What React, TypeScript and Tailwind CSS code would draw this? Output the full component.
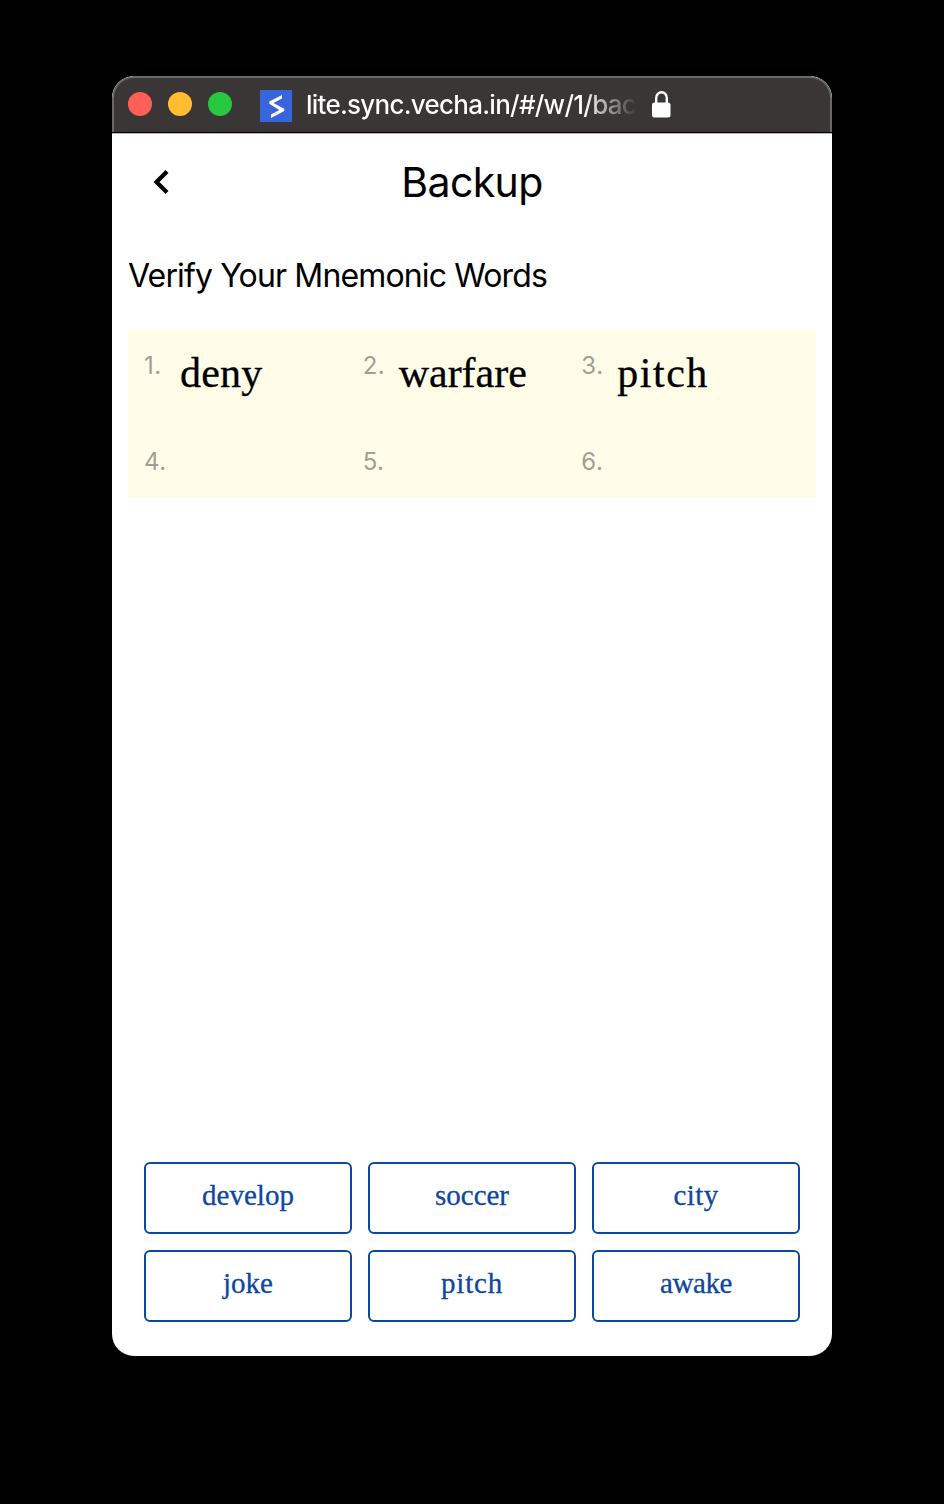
const slots = [
  { word: "deny", spacing: "tracking-[0.2px]" },
  { word: "warfare", spacing: "" },
  { word: "pitch", spacing: "tracking-[1.5px]" },
  { word: "", spacing: "" },
  { word: "", spacing: "" },
  { word: "", spacing: "" },
];

const choices = [
  { word: "develop", spacing: "" },
  { word: "soccer", spacing: "" },
  { word: "city", spacing: "tracking-[0.4px]" },
  { word: "joke", spacing: "" },
  { word: "pitch", spacing: "tracking-[0.8px]" },
  { word: "awake", spacing: "tracking-[-0.4px]" },
];

function TitleBar() {
  return (
    <div className="flex h-14 shrink-0 items-center rounded-t-[22px] border-2 border-b-0 border-[#6a6867] bg-[#3a3635] pl-3.5">
      <div className="mb-0.5 flex gap-4">
        <span className="size-6 rounded-full bg-[#ff5f57]" />
        <span className="size-6 rounded-full bg-[#febc2e]" />
        <span className="size-6 rounded-full bg-[#28c840]" />
      </div>
      <svg className="mt-0.5 ml-7 size-8 shrink-0" viewBox="0 0 32 32">
        <rect width="32" height="32" fill="#3864dc" />
        <path d="M22 5v3.500L13.500 13 24.300 18.800v2.200L11 28v-3.500L19.300 20 9.300 13.700v-2.200z" fill="#fff" />
      </svg>
      <div className="ml-3.5 w-[332px] whitespace-nowrap bg-linear-to-r from-white from-84% to-[#3a3635] to-100% bg-clip-text text-[26px] leading-[32px] font-medium tracking-[-0.75px] text-transparent">
        lite.sync.vecha.in/#/w/1/back
      </div>
      <svg className="mb-0.5 ml-3.5 h-7 w-5 shrink-0" viewBox="0 0 20 28">
        <path d="M4.200 14V8a5.300 5.800 0 0 1 10.600 0v6" fill="none" stroke="#fff" strokeWidth="2.400" />
        <rect y="12.500" width="18.500" height="15" rx="2.500" fill="#fff" />
      </svg>
    </div>
  );
}

export default function App() {
  return (
    <main className="flex h-[1504px] w-[944px] justify-center bg-black pt-[76px] font-['Inter',sans-serif]">
      <div className="flex h-[1280px] w-[720px] flex-col overflow-hidden rounded-[22px] bg-white text-black">
        <TitleBar />
        <div className="h-0.5 shrink-0 border-t border-black bg-[#b9b9b9]" />
        <header className="grid h-24 shrink-0 grid-cols-[100px_1fr_100px] items-center">
          <button aria-label="Back" className="pl-[41px]">
            <svg className="-ml-px size-[26px]" viewBox="0 0 26 26">
              <path d="M15 2.500L4.500 13 15 23.500" fill="none" stroke="#000" strokeWidth="4.200" />
            </svg>
          </button>
          <h1 className="text-center text-[41px] leading-[48px] tracking-[-0.6px]">Backup</h1>
        </header>
        <h2 className="mt-[26px] ml-4 text-[32px] leading-10 tracking-[-0.86px] whitespace-nowrap">
          Verify Your Mnemonic Words
        </h2>
        <ol className="mx-4 mt-[34px] grid h-[168px] grid-cols-3 grid-rows-[96px_72px] bg-[#fffde7] px-4">
          {slots.map(({ word, spacing }, i) => (
            <li key={i} className="flex">
              <span className="mt-5 w-9 shrink-0 text-2xl leading-8 tracking-[0.5px] text-[#a1a094]">{i + 1}.</span>
              <span
                className={`mt-[19px] font-['Liberation_Serif',serif] text-[42px] leading-[48px] [-webkit-text-stroke:0.3px_currentColor] ${spacing}`}
              >
                {word}
              </span>
            </li>
          ))}
        </ol>
        <div className="mx-8 mt-auto mb-[34px] grid grid-cols-3 gap-4">
          {choices.map(({ word, spacing }) => (
            <button
              key={word}
              className={`h-[72px] rounded-md border-2 border-[#0d47a1] pb-1.5 font-['Liberation_Serif',serif] text-[29px] leading-8 text-[#0d47a1] [-webkit-text-stroke:0.3px_currentColor] ${spacing}`}
            >
              {word}
            </button>
          ))}
        </div>
      </div>
    </main>
  );
}
